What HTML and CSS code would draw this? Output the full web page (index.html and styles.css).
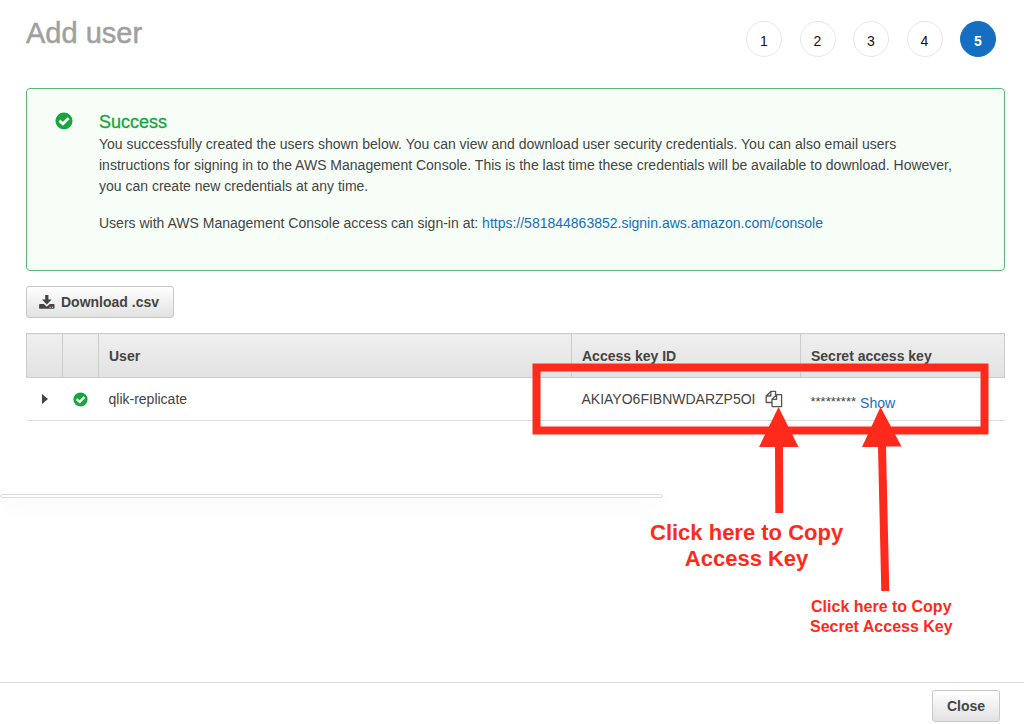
FILE: index.html
```
<!DOCTYPE html>
<html lang="en">
<head>
<meta charset="utf-8">
<title>Add user</title>
<link rel="stylesheet" href="styles.css">
</head>
<body>
<svg class="sprite" aria-hidden="true">
  <symbol id="check" viewBox="0 0 18 18">
    <circle cx="9" cy="9" r="8.5" fill="#16a53f"/>
    <path d="M4.400 8.600 7.900 11.800 13.600 6.200" fill="none" stroke="#fff" stroke-width="2.800"/>
  </symbol>
</svg>
<div class="page">
  <header class="header">
    <h1 class="title">Add user</h1>
    <ol class="steps">
      <li class="step">1</li>
      <li class="step">2</li>
      <li class="step">3</li>
      <li class="step">4</li>
      <li class="step step-active" aria-current="step">5</li>
    </ol>
  </header>

  <main class="main">
    <section class="alert">
      <svg class="alert-icon"><use href="#check"/></svg>
      <div class="alert-body">
        <h2 class="alert-title">Success</h2>
        <p class="alert-text">You successfully created the users shown below. You can view and download user security credentials. You can also email users instructions for signing in to the AWS Management Console. This is the last time these credentials will be available to download. However, you can create new credentials at any time.</p>
        <p class="alert-text">Users with AWS Management Console access can sign-in at: <a class="link" href="#console">https://581844863852.signin.aws.amazon.com/console</a></p>
      </div>
    </section>

    <button class="button download" type="button">
      <svg class="download-icon" viewBox="0 0 16 15" aria-hidden="true">
        <path d="M6.2 0h3.200v4.600h3.200L7.800 9.400 3 4.600h3.200z" fill="#444"/>
        <path d="M.8 9h4l3 2.700 3-2.700h4q.7 0 .7.7v3.400q0 .7-.7.7H.8q-.7 0-.7-.7V9.700q0-.7.7-.7z" fill="#444"/>
        <path d="M10.600 11.700h1.200v1h-1.200zM12.900 11.700h1.200v1h-1.200z" fill="#ddd"/>
      </svg>
      Download .csv
    </button>

    <table class="users">
      <colgroup><col class="col-icon"><col class="col-icon"><col><col class="col-key"><col class="col-secret"></colgroup>
      <thead>
        <tr><th></th><th></th><th>User</th><th>Access key ID</th><th>Secret access key</th></tr>
      </thead>
      <tbody>
        <tr>
          <td class="cell-icon"><button class="plain" type="button" aria-label="Expand"><svg class="caret" viewBox="0 0 6 10"><path d="M0 0 6 5 0 10z" fill="#444"/></svg></button></td>
          <td class="cell-icon"><svg class="row-check"><use href="#check"/></svg></td>
          <td>qlik-replicate</td>
          <td><div class="key">AKIAYO6FIBNWDARZP5OI
            <button class="plain" type="button" aria-label="Copy"><svg class="copy" viewBox="0 0 18 18" fill="none" stroke="#555" stroke-width="1.300" stroke-linejoin="round"><path d="M7 12.500H1.200V6L5.800 1.400H10.600V5.200M5.800 1.400V6H1.200"/><path d="M11.600 4.700H16.600V16.600H7V9.300zM11.600 4.700V9.300H7" fill="#fff"/></svg></button></div></td>
          <td><div class="secret"><span class="mask">*********</span><a class="link" href="#show">Show</a></div></td>
        </tr>
      </tbody>
    </table>
  </main>

  <div class="strip"></div>

  <footer class="footer"><button class="button" type="button">Close</button></footer>

  <svg class="marks" viewBox="0 0 1024 724" aria-hidden="true">
    <rect x="536.500" y="367.500" width="448" height="63" fill="none" stroke="#ff2a1c" stroke-width="8"/>
    <path d="M778.500 407 798.500 447H783L783.300 513H775.300L775 447H759z" fill="#ff2a1c"/>
    <path d="M880.500 407 901.500 446.500H886L889.300 591H881.300L878 447H862z" fill="#ff2a1c"/>
  </svg>
  <p class="note note-key">Click here to Copy<br>Access Key</p>
  <p class="note note-secret">Click here to Copy<br>Secret Access Key</p>
</div>
</body>
</html>
```
FILE: styles.css
```
* { box-sizing: border-box; }
body {
  margin: 0;
  font: 14px/21px "Liberation Sans", Arial, sans-serif;
  color: #444;
  background: #fff;
}
.sprite { position: absolute; width: 0; height: 0; }
.page {
  position: relative;
  display: flex;
  flex-direction: column;
  min-height: 100vh;
}
.header {
  display: flex;
  justify-content: space-between;
  align-items: flex-start;
  padding: 16px 28px 0 26px;
}
.title {
  margin: 0;
  font-size: 29px;
  line-height: 34px;
  font-weight: 400;
  color: #a0a0a0;
  -webkit-text-stroke: 0.5px #a0a0a0;
}
.steps {
  display: flex;
  justify-content: space-between;
  width: 250px;
  margin: 0;
  padding: 5px 0 0;
  list-style: none;
}
.step {
  width: 36px;
  height: 36px;
  padding-top: 1px;
  border: 1px solid #e8e8e8;
  border-radius: 50%;
  font-size: 14px;
  line-height: 36px;
  text-align: center;
  color: #111;
}
.step-active {
  border-color: #146fc2;
  background: #146fc2;
  color: #fff;
  font-weight: 700;
}
.main { padding: 31px 19px 0 26px; }
.alert {
  display: flex;
  gap: 26px;
  padding: 21px 36px 36px 28px;
  border: 1px solid #5cba78;
  border-radius: 4px;
  background: #f7fef8;
}
.alert-icon { flex: none; width: 18px; height: 18px; margin-top: 2px; }
.alert-title {
  margin: 0;
  font-size: 18px;
  line-height: 24px;
  font-weight: 400;
  color: #16a53f;
  -webkit-text-stroke: 0.3px #16a53f;
}
.alert-text { margin: 0 0 16px; }
.alert-text:last-child { margin: 0; }
.link { color: #146ebf; text-decoration: none; }
.button {
  height: 32px;
  padding: 0 14px;
  border: 1px solid #c8c8c8;
  border-radius: 3px;
  background: linear-gradient(#fff, #e2e2e2);
  font: 700 14px/20px "Liberation Sans", Arial, sans-serif;
  color: #444;
}
.download {
  display: flex;
  align-items: center;
  gap: 6px;
  margin: 15px 0;
  padding: 0 14px 0 12px;
}
.download-icon { width: 16px; height: 15px; }
.plain {
  display: flex;
  padding: 0;
  border: 0;
  background: none;
}
.users {
  width: 100%;
  table-layout: fixed;
  border-collapse: collapse;
}
.col-icon { width: 36px; }
.col-key { width: 229px; }
.col-secret { width: 204px; }
.users th {
  height: 44px;
  padding: 1px 10px 0;
  border: 1px solid #ccc;
  border-width: 1px 0 1px 1px;
  background: linear-gradient(#efefef, #e2e2e2);
  text-align: left;
}
.users th:last-child { border-right-width: 1px; }
.users td {
  height: 43px;
  padding: 0 10px;
  border-bottom: 1px solid #ddd;
}
.users .cell-icon { padding: 0; }
.cell-icon .plain, .row-check { display: block; margin: 0 auto; }
.caret { display: block; width: 6px; height: 10px; }
.row-check { width: 15px; height: 15px; }
.key { display: flex; align-items: center; gap: 9px; }
.copy { width: 18px; height: 18px; }
.secret { display: flex; align-items: flex-start; gap: 4px; padding-top: 8px; }
.mask { font-size: 13px; line-height: 18px; }
.strip {
  width: 663px;
  height: 4px;
  margin-top: 73px;
  border: 1px solid #ddd;
  border-radius: 3px;
  box-shadow: 0 5px 20px rgba(0, 0, 0, 0.08);
}
.footer {
  display: flex;
  justify-content: flex-end;
  margin-top: auto;
  padding: 7px 24px 2px;
  border-top: 1px solid #ddd;
}
.marks {
  position: absolute;
  top: 0;
  left: 0;
  width: 1024px;
  height: 724px;
  pointer-events: none;
}
.note {
  position: absolute;
  margin: 0;
  font-weight: 700;
  text-align: center;
  white-space: nowrap;
  color: #ff2a1c;
}
.note-key { top: 520px; left: 650px; font-size: 22px; line-height: 26px; }
.note-secret { top: 597px; left: 810px; font-size: 16px; line-height: 20px; }
```
